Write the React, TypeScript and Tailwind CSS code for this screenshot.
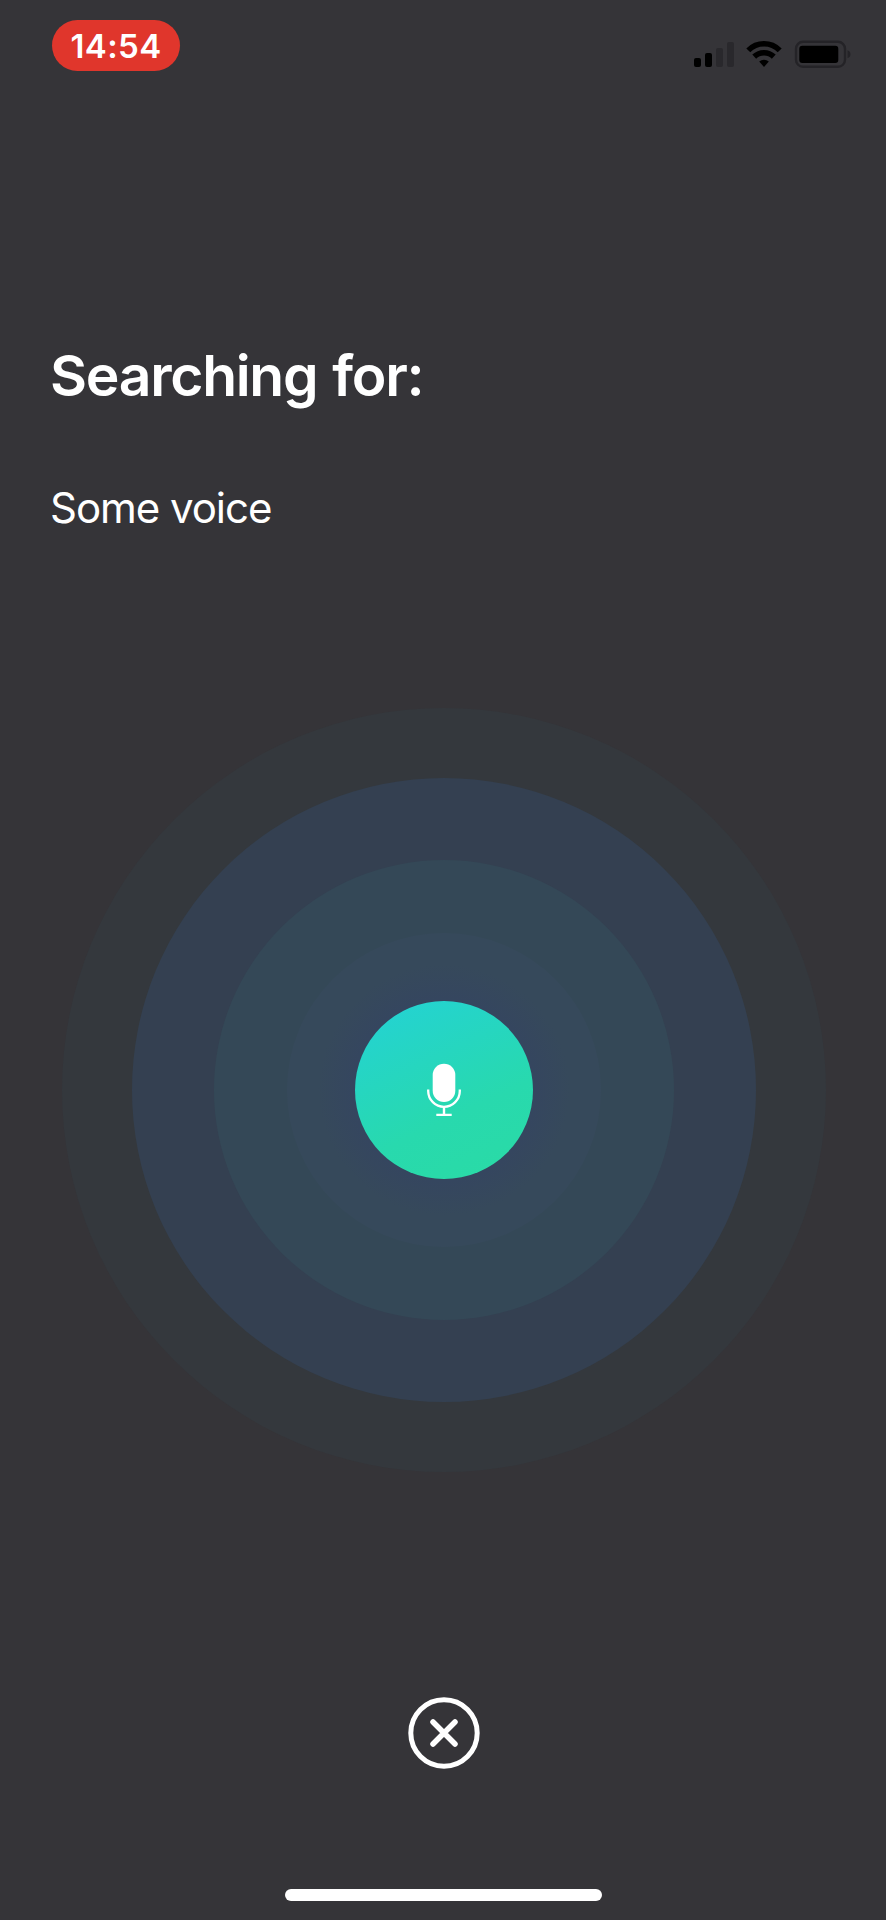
function StatusBar() {
  return (
    <header className="flex h-[71px] shrink-0 items-start justify-between pt-5 pr-[34px] pl-[52px]">
      <div className="flex h-[51px] w-32 items-center justify-center rounded-full bg-[#e0362c] pt-px text-[33px] leading-none font-semibold tracking-[0.4px] text-white">
        14:54
      </div>
      <div className="pt-5">
        <svg width="160" height="30" viewBox="0 0 160 30" className="block">
          <g>
            <rect x="2" y="18" width="7" height="9" rx="2" fill="#000" />
            <rect x="13" y="13" width="7" height="14" rx="2" fill="#000" />
            <rect x="24" y="8" width="7" height="19" rx="2" fill="#29282c" />
            <rect x="35" y="2" width="7" height="25" rx="2" fill="#29282c" />
          </g>
          <g fill="none" stroke="#000" strokeWidth="5.6">
            <path d="M56.3 10.4a22 22 0 0 1 31.4 0" />
            <path d="M62.2 16.6a14.2 14.2 0 0 1 19.6 0" />
          </g>
          <path d="M67.2 21.6a7 7 0 0 1 9.600 0L72 26.9Z" fill="#000" />
          <rect x="104" y="1.8" width="49" height="25" rx="7" fill="none" stroke="#242327" strokeWidth="2.4" />
          <rect x="107.300" y="5.8" width="39" height="17.2" rx="3" fill="#000" />
          <path d="M155.500 10.3c4 1.2 4 6.800 0 8Z" fill="#242327" />
        </svg>
      </div>
    </header>
  );
}

function VoiceRings() {
  return (
    <div className="flex size-[764px] items-center justify-center rounded-full bg-[#34383d]">
      <div className="flex size-[624px] items-center justify-center rounded-full bg-[#344051]">
        <div className="flex size-[460px] items-center justify-center rounded-full bg-[#344857]">
          <div className="flex size-[314px] items-center justify-center rounded-full bg-[radial-gradient(circle_closest-side,#35465f_58%,#36495b_80%)]">
            <button
              aria-label="Microphone"
              className="flex size-[178px] items-center justify-center rounded-full bg-[linear-gradient(155deg,#24d3d0_10%,#28d9ae_62%,#2adba4_100%)]"
            >
              <svg width="36" height="56" viewBox="0 0 36 56" fill="none">
                <rect x="6.700" y="1.700" width="22.600" height="38.300" rx="11.300" fill="#fff" />
                <path d="M2.200 27.500v1.500a15.800 15.800 0 0 0 31.600 0v-1.500" stroke="#fff" strokeWidth="2.300" />
                <path d="M18 44.500v8M10.300 52.900h15.400" stroke="#fff" strokeWidth="2.400" />
              </svg>
            </button>
          </div>
        </div>
      </div>
    </div>
  );
}

export default function App() {
  return (
    <main className="flex h-[1920px] w-[886px] flex-col overflow-hidden bg-[#353438] font-['Inter','Liberation_Sans',sans-serif] text-white">
      <StatusBar />
      <section className="flex h-[637px] shrink-0 flex-col pt-[270px] pl-[50px]">
        <h1 className="text-[57px] leading-[70px] font-semibold tracking-[-1.3px] [word-spacing:2px]">
          Searching for:
        </h1>
        <p className="mt-[70px] text-[42px] leading-[54px] tracking-[-1.05px]">Some voice</p>
      </section>
      <section className="flex shrink-0 justify-center pl-px">
        <VoiceRings />
      </section>
      <footer className="flex flex-1 flex-col items-center justify-between pt-[225px] pb-[19px]">
        <button aria-label="Close" className="ml-px block">
          <svg width="72" height="72" viewBox="0 0 72 72" fill="none" stroke="#fff">
            <circle cx="36" cy="36" r="33.200" strokeWidth="5" />
            <path
              d="M25 25 47 47M47 25 25 47"
              strokeWidth="5.500"
              strokeLinecap="round"
            />
          </svg>
        </button>
        <div className="ml-px h-3 w-[317px] rounded-full bg-white" />
      </footer>
    </main>
  );
}
